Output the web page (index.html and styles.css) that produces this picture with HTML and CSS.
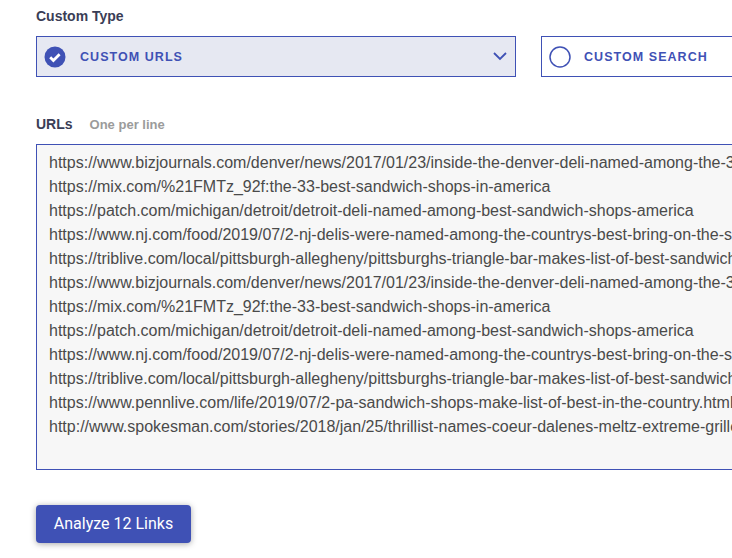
FILE: index.html
```html
<!DOCTYPE html>
<html lang="en">
<head>
<meta charset="utf-8">
<title>Custom Type</title>
<link rel="stylesheet" href="styles.css">
</head>
<body>
<main class="page">
  <h2 class="label type-label">Custom Type</h2>
  <div class="options">
    <div class="option selected">
      <svg class="radio" width="22" height="22" viewBox="0 0 22 22"><circle cx="11" cy="11" r="10.5" fill="#3f51b5"/><path d="M6.2 11.2l3.2 3.2 6.2-6.2" fill="none" stroke="#fff" stroke-width="2.8"/></svg>
      <span class="option-text">CUSTOM URLS</span>
      <svg class="chevron" width="14" height="9" viewBox="0 0 14 9"><path d="M1 1l6 6 6-6" fill="none" stroke="#3f51b5" stroke-width="1.8"/></svg>
    </div>
    <div class="option other">
      <svg class="radio" width="22" height="22" viewBox="0 0 22 22"><circle cx="11" cy="11" r="10" fill="none" stroke="#3f51b5" stroke-width="1.5"/></svg>
      <span class="option-text">CUSTOM SEARCH</span>
    </div>
  </div>
  <div class="urls-head">
    <span class="label">URLs</span>
    <span class="hint">One per line</span>
  </div>
  <div class="urls">
    <div>https://www.bizjournals.com/denver/news/2017/01/23/inside-the-denver-deli-named-among-the-33-best-sandwich-shops.html</div>
    <div>https://mix.com/%21FMTz_92f:the-33-best-sandwich-shops-in-america</div>
    <div>https://patch.com/michigan/detroit/detroit-deli-named-among-best-sandwich-shops-america</div>
    <div>https://www.nj.com/food/2019/07/2-nj-delis-were-named-among-the-countrys-best-bring-on-the-subs.html</div>
    <div>https://triblive.com/local/pittsburgh-allegheny/pittsburghs-triangle-bar-makes-list-of-best-sandwich-shops/</div>
    <div>https://www.bizjournals.com/denver/news/2017/01/23/inside-the-denver-deli-named-among-the-33-best-sandwich-shops.html</div>
    <div>https://mix.com/%21FMTz_92f:the-33-best-sandwich-shops-in-america</div>
    <div>https://patch.com/michigan/detroit/detroit-deli-named-among-best-sandwich-shops-america</div>
    <div>https://www.nj.com/food/2019/07/2-nj-delis-were-named-among-the-countrys-best-bring-on-the-subs.html</div>
    <div>https://triblive.com/local/pittsburgh-allegheny/pittsburghs-triangle-bar-makes-list-of-best-sandwich-shops/</div>
    <div>https://www.pennlive.com/life/2019/07/2-pa-sandwich-shops-make-list-of-best-in-the-country.html</div>
    <div>http://www.spokesman.com/stories/2018/jan/25/thrillist-names-coeur-dalenes-meltz-extreme-grilled-cheese/</div>
  </div>
  <button class="analyze" type="button">Analyze 12 Links</button>
</main>
</body>
</html>
```
FILE: styles.css
```css
html, body {
  margin: 0;
  padding: 0;
  width: 732px;
  height: 558px;
  overflow: hidden;
  background: #fff;
}
.page {
  box-sizing: border-box;
  width: 732px;
  height: 558px;
  padding: 9px 0 0 36px;
  overflow: hidden;
  font-family: "Liberation Sans", Arial, sans-serif;
}
.label {
  margin: 0;
  font-size: 14px;
  font-weight: 700;
  line-height: 15px;
  color: #3a3d56;
}
.type-label {
  display: block;
}
.options {
  display: flex;
  gap: 25px;
  margin-top: 12px;
  width: 760px;
}
.option {
  box-sizing: border-box;
  flex: none;
  display: flex;
  align-items: center;
  height: 41px;
  border: 1px solid #3f51b5;
  padding-left: 7px;
  color: #3f51b5;
}
.selected {
  width: 480px;
  background: #e6e8f2;
}
.other {
  width: 260px;
  background: #fff;
}
.radio {
  flex: none;
}
.option-text {
  margin-left: 14px;
  font-size: 12.5px;
  font-weight: 700;
  letter-spacing: 1.05px;
}
.other .option-text {
  margin-left: 13px;
}
.chevron {
  margin-left: auto;
  margin-right: 8px;
}
.urls-head {
  display: flex;
  align-items: baseline;
  gap: 17px;
  margin-top: 40px;
}
.hint {
  font-size: 13px;
  font-weight: 700;
  color: #9b9b9b;
}
.urls {
  box-sizing: border-box;
  width: 760px;
  height: 326px;
  margin-top: 12px;
  padding: 6px 12px 4px;
  border: 1px solid #3f51b5;
  background: #f7f7f7;
  font-size: 16px;
  line-height: 24px;
  color: #4a4a4a;
  white-space: nowrap;
  overflow: hidden;
}
.analyze {
  display: block;
  box-sizing: border-box;
  width: 155px;
  height: 38px;
  margin-top: 35px;
  padding: 0 0 2px;
  border: 0;
  border-radius: 4px;
  background: #3f51b5;
  color: #fff;
  font-family: Roboto, sans-serif;
  font-size: 16px;
  font-weight: 400;
  box-shadow: 0 1px 6px rgba(0, 0, 0, 0.35);
}
```
